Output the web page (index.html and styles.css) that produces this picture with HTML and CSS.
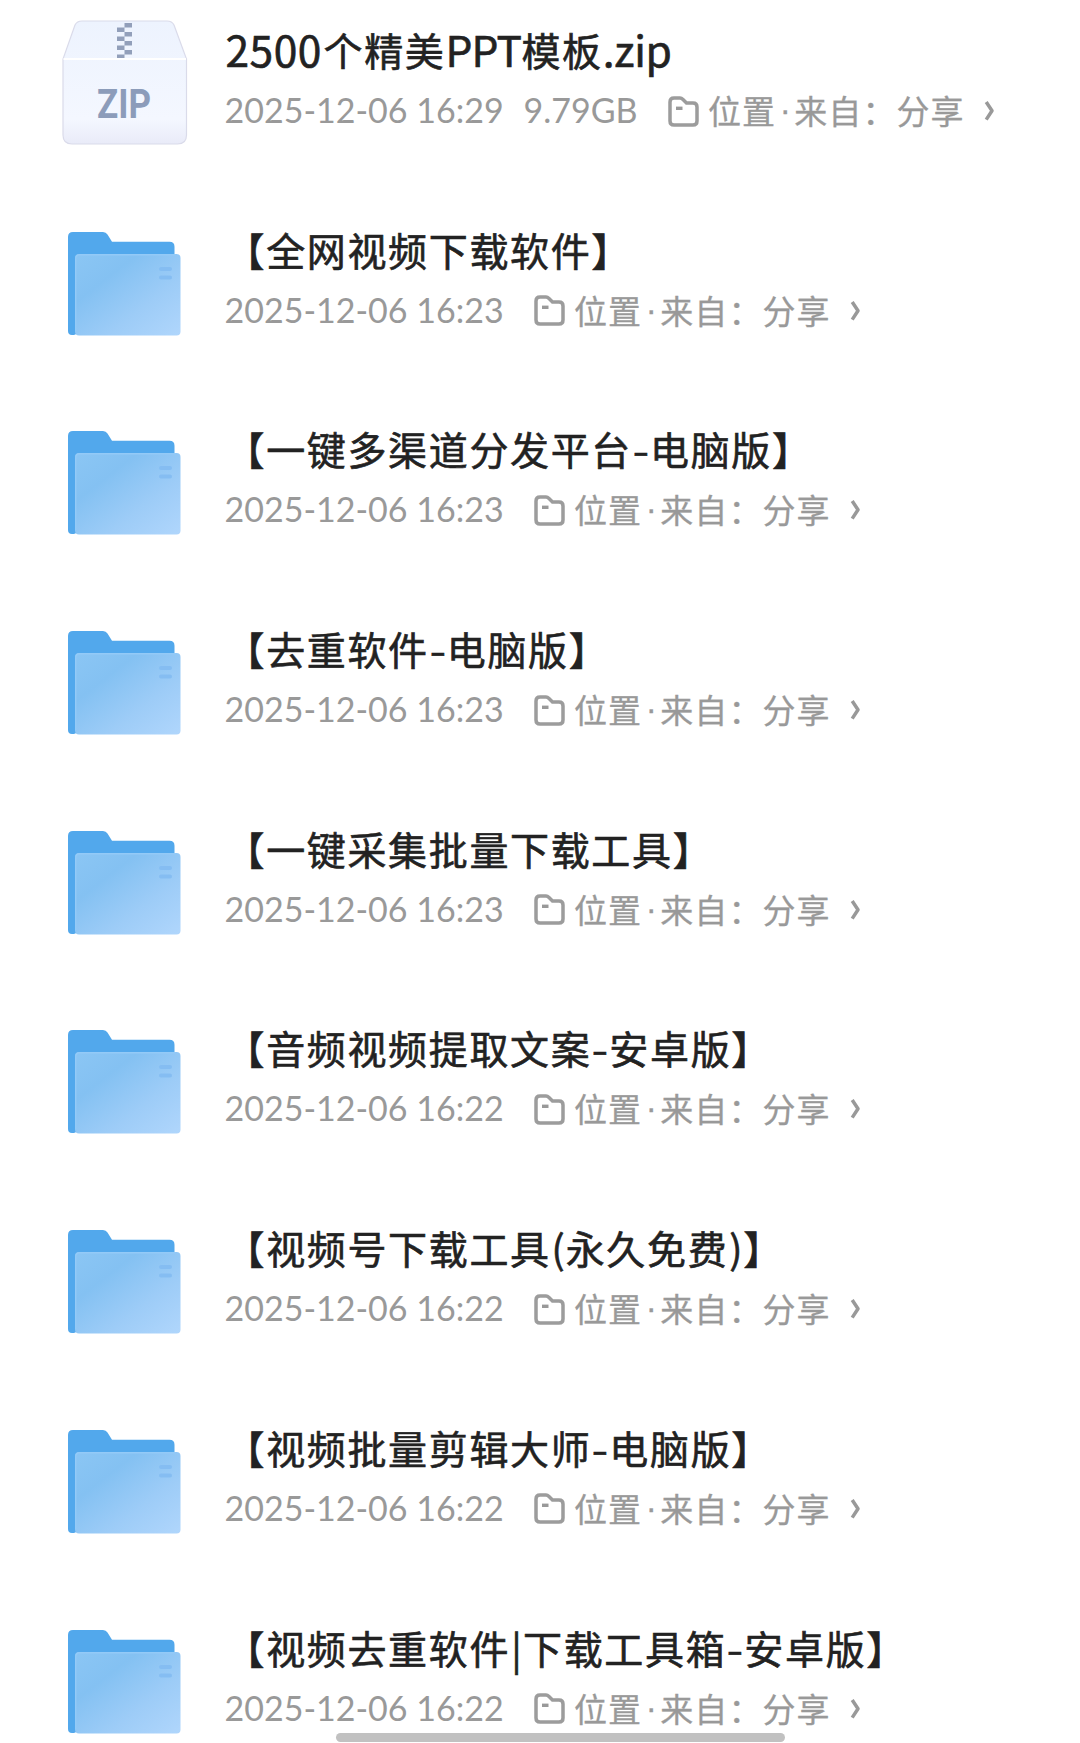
FILE: index.html
```html
<!DOCTYPE html>
<html lang="zh-CN">
<head>
<meta charset="utf-8">
<title>文件列表</title>
<link rel="stylesheet" href="styles.css">
</head>
<body>
<svg class="defs" width="0" height="0" aria-hidden="true">
  <defs>
    <linearGradient id="front" x1="0" y1="0" x2="1" y2="1"><stop offset="0" stop-color="#8bc6f4"/><stop offset=".3" stop-color="#84c1f2"/><stop offset=".65" stop-color="#9dccf7"/><stop offset="1" stop-color="#b0d6fc"/></linearGradient>
    <linearGradient id="box" x1="0" y1="0" x2="0" y2="1"><stop offset="0" stop-color="#edf3fe"/><stop offset=".8" stop-color="#f4f7ff"/><stop offset="1" stop-color="#e9ebf8"/></linearGradient>
  </defs>
  <symbol id="folder" viewBox="0 0 150 140">
    <path d="M18 22q0-5 5-5h30q3 0 4.500 2.500l4.500 7.300h57.500q5 0 5 5V75L24 120h-2q-4 0-4-4z" fill="#52a8ec"/>
    <rect x="25" y="39" width="105.500" height="81.500" rx="4" fill="url(#front)"/>
    <path d="M25.700 116V44q0-4.300 4-4.300h96" fill="none" stroke="#93caf7" stroke-width="1.400"/>
    <rect x="109" y="52" width="13" height="4" rx="2" fill="#85bdf2"/>
    <rect x="109" y="60.500" width="13" height="4" rx="2" fill="#85bdf2"/>
  </symbol>
  <symbol id="place" viewBox="0 0 31 31">
    <path d="M2 6q0-4 4-4h6q1.500 0 3 1.500L18.500 7H25q4 0 4 4v14q0 4-4 4H6q-4 0-4-4z" fill="none" stroke="#9c9c9c" stroke-width="3.500"/>
    <path d="M8 12.300h6.500" stroke="#999" stroke-width="3.400"/>
  </symbol>
  <symbol id="arrow" viewBox="0 0 12 22">
    <path d="M2.200 2l5.800 8.800-5.800 8.800" fill="none" stroke="#999" stroke-width="3.500" stroke-linejoin="round"/>
  </symbol>
</svg>
<main class="list">
  <article class="row">
    <svg class="icon" viewBox="0 0 150 140">
      <path d="M25 10q2-4 7-4h85q5 0 7 4l12.500 34v76q0 9-9 9H22q-9 0-9-9V44z" fill="url(#box)" stroke="#dadbea" stroke-width="1.200"/>
      <path d="M13.500 44h122.500" stroke="#fff" stroke-width="2"/>
      <path d="M74.500 8h7.500v4.500h-7.500zM67 12.500h7.500V17H67zM74.500 17h7.500v4.500h-7.500zM67 21.500h7.500V26H67zM74.500 26h7.500v4.500h-7.500zM67 30.500h7.500V35H67zM74.500 35h7.500v4.500h-7.500zM67 39.500h7.500V43H67z" fill="#929fba"/>
      <text class="zip" x="47" y="102.500" textLength="54" lengthAdjust="spacingAndGlyphs">ZIP</text>
    </svg>
    <div class="info">
      <h2 class="title"><span class="latin num">2500</span>个精美<span class="latin ppt">PPT</span>模板<span class="latin ext">.zip</span></h2>
      <p class="meta"><span class="date">2025-12-06 16:29</span><span class="size">9.79GB</span><svg class="place"><use href="#place"/></svg><span class="from">位置<span class="dot">·</span>来自：分享</span><svg class="arrow"><use href="#arrow"/></svg></p>
    </div>
  </article>
  <article class="row">
    <svg class="icon"><use href="#folder"/></svg>
    <div class="info">
      <h2 class="title">【全网视频下载软件】</h2>
      <p class="meta"><span class="date">2025-12-06 16:23</span><svg class="place"><use href="#place"/></svg><span class="from">位置<span class="dot">·</span>来自：分享</span><svg class="arrow"><use href="#arrow"/></svg></p>
    </div>
  </article>
  <article class="row">
    <svg class="icon"><use href="#folder"/></svg>
    <div class="info">
      <h2 class="title">【一键多渠道分发平台<span class="dash">-</span>电脑版】</h2>
      <p class="meta"><span class="date">2025-12-06 16:23</span><svg class="place"><use href="#place"/></svg><span class="from">位置<span class="dot">·</span>来自：分享</span><svg class="arrow"><use href="#arrow"/></svg></p>
    </div>
  </article>
  <article class="row">
    <svg class="icon"><use href="#folder"/></svg>
    <div class="info">
      <h2 class="title">【去重软件<span class="dash">-</span>电脑版】</h2>
      <p class="meta"><span class="date">2025-12-06 16:23</span><svg class="place"><use href="#place"/></svg><span class="from">位置<span class="dot">·</span>来自：分享</span><svg class="arrow"><use href="#arrow"/></svg></p>
    </div>
  </article>
  <article class="row">
    <svg class="icon"><use href="#folder"/></svg>
    <div class="info">
      <h2 class="title">【一键采集批量下载工具】</h2>
      <p class="meta"><span class="date">2025-12-06 16:23</span><svg class="place"><use href="#place"/></svg><span class="from">位置<span class="dot">·</span>来自：分享</span><svg class="arrow"><use href="#arrow"/></svg></p>
    </div>
  </article>
  <article class="row">
    <svg class="icon"><use href="#folder"/></svg>
    <div class="info">
      <h2 class="title">【音频视频提取文案<span class="dash">-</span>安卓版】</h2>
      <p class="meta"><span class="date">2025-12-06 16:22</span><svg class="place"><use href="#place"/></svg><span class="from">位置<span class="dot">·</span>来自：分享</span><svg class="arrow"><use href="#arrow"/></svg></p>
    </div>
  </article>
  <article class="row">
    <svg class="icon"><use href="#folder"/></svg>
    <div class="info">
      <h2 class="title">【视频号下载工具<span class="paren">(</span>永久免费<span class="paren">)</span>】</h2>
      <p class="meta"><span class="date">2025-12-06 16:22</span><svg class="place"><use href="#place"/></svg><span class="from">位置<span class="dot">·</span>来自：分享</span><svg class="arrow"><use href="#arrow"/></svg></p>
    </div>
  </article>
  <article class="row">
    <svg class="icon"><use href="#folder"/></svg>
    <div class="info">
      <h2 class="title">【视频批量剪辑大师<span class="dash">-</span>电脑版】</h2>
      <p class="meta"><span class="date">2025-12-06 16:22</span><svg class="place"><use href="#place"/></svg><span class="from">位置<span class="dot">·</span>来自：分享</span><svg class="arrow"><use href="#arrow"/></svg></p>
    </div>
  </article>
  <article class="row">
    <svg class="icon"><use href="#folder"/></svg>
    <div class="info">
      <h2 class="title">【视频去重软件<span class="bar">|</span>下载工具箱<span class="dash">-</span>安卓版】</h2>
      <p class="meta"><span class="date">2025-12-06 16:22</span><svg class="place"><use href="#place"/></svg><span class="from">位置<span class="dot">·</span>来自：分享</span><svg class="arrow"><use href="#arrow"/></svg></p>
    </div>
  </article>
</main>
<div class="home-bar"></div>
</body>
</html>
```
FILE: styles.css
```css
body {
  margin: 0;
  height: 1743px;
  overflow: hidden;
  background: #fff;
  font-family: "Noto Sans CJK SC", sans-serif;
}
.defs { position: absolute; }
.list { padding-top: 15px; }
.row {
  display: flex;
  height: 199.700px;
  padding-left: 50px;
}
.icon {
  flex: none;
  width: 150px;
  height: 140px;
  overflow: visible;
}
.zip {
  font: bold 41px "Roboto", sans-serif;
  fill: #8c9cba;
}
.info { padding-left: 25.500px; }
.title {
  display: flex;
  margin: 0;
  height: 70px;
  line-height: 68px;
  font-size: 39px;
  letter-spacing: 1.650px;
  font-weight: 400;
  text-spacing-trim: space-all;
  white-space: nowrap;
  color: #222;
  -webkit-text-stroke: 0.600px #222;
}
.latin { font-size: 42.500px; }
.num { width: 98px; letter-spacing: 0.500px; }
.ppt { width: 76px; letter-spacing: -0.800px; }
.ext { letter-spacing: -0.300px; }
.dash { width: 18px; letter-spacing: 0; text-align: center; transform: scaleX(1.200); }
.paren { width: 15px; letter-spacing: 0; text-align: center; }
.bar { width: 13px; letter-spacing: 0; text-align: center; }
.meta {
  display: flex;
  align-items: center;
  margin: 0;
  height: 52px;
  line-height: 52px;
  font-size: 33px;
  white-space: nowrap;
  text-spacing-trim: space-all;
  color: #999;
}
.date, .size {
  font-family: "Lato", sans-serif;
  font-size: 34px;
  line-height: 50px;
  height: 52px;
  margin-left: -1px;
}
.date { width: 282px; }
.size { width: 130px; margin-left: 17px; }
.place { width: 31px; height: 31px; margin-left: 27px; }
.size + .place { margin-left: 14px; }
.from {
  display: flex;
  height: 52px;
  line-height: 50px;
  margin-left: 9.500px;
  letter-spacing: 1.100px;
  -webkit-text-stroke: 0.300px #999;
}
.dot {
  width: 18px;
  font-family: "Liberation Sans", sans-serif;
  letter-spacing: 0;
  text-align: center;
}
.arrow { width: 12px; height: 22px; margin-left: 19px; }
.home-bar {
  position: absolute;
  left: 336px;
  top: 1733px;
  width: 449px;
  height: 9px;
  border-radius: 5px;
  background: #c1c1c1;
}
```
